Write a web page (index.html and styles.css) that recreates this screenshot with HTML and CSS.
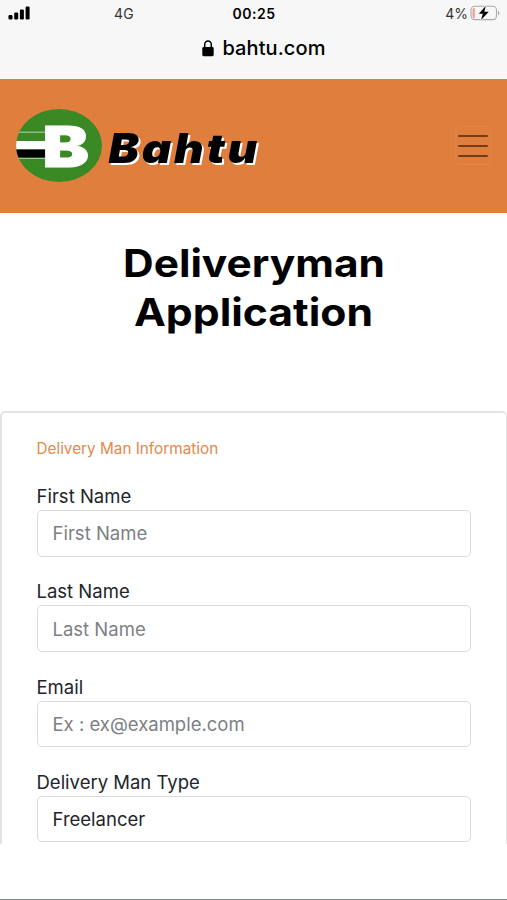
FILE: index.html
```html
<!DOCTYPE html>
<html lang="en">
<head>
<meta charset="utf-8">
<meta name="viewport" content="width=device-width, initial-scale=1">
<title>Deliveryman Application</title>
<link rel="stylesheet" href="styles.css">
</head>
<body>
<header class="browser">
  <div class="status">
    <div class="signal">
      <svg width="23" height="14" viewBox="0 0 23 14"><rect x="0.5" y="9" width="4" height="4.5" rx="1.2"/><rect x="6.2" y="6.5" width="4" height="7" rx="1.2"/><rect x="11.9" y="3.5" width="4" height="10" rx="1.2"/><rect x="17.6" y="0.5" width="4" height="13" rx="1.2"/></svg>
      <span class="network">4G</span>
    </div>
    <span class="clock">00:25</span>
    <div class="power">
      <span class="percent">4%</span>
      <svg width="30" height="16" viewBox="0 0 30 16"><rect x="1" y="1.2" width="25.500" height="13.4" rx="3.8" fill="none" stroke="#a9a9ab" stroke-width="1.1"/><path d="M4.8 3H4a1.5 1.5 0 0 0-1.5 1.5v7A1.500 1.500 0 0 0 4 13h.8z" fill="#ef9d94"/><path d="M28 5.500c1.800.7 1.800 4.200 0 5z" fill="#a9a9ab"/><path d="M15.700 1 8.800 8.800h4L11 15l7.800-8.200h-4.500z" stroke="#f7f7f7" stroke-width="1.4" paint-order="stroke"/></svg>
    </div>
  </div>
  <div class="address">
    <svg width="12" height="17" viewBox="0 0 12 17"><path d="M2.7 8V4.8a3.3 3.8 0 0 1 6.6 0V8" fill="none" stroke="#000" stroke-width="1.5"/><rect x="0.3" y="7" width="11.4" height="9.2" rx="1.4"/></svg>
    <span class="domain">bahtu.com</span>
  </div>
</header>
<nav class="navbar">
  <svg class="logo" width="250" height="80" viewBox="0 0 250 80">
    <defs><clipPath id="oval"><ellipse cx="43" cy="39.5" rx="43" ry="36.5"/></clipPath></defs>
    <ellipse cx="43" cy="39.5" rx="43" ry="36.5" fill="#3b8924"/>
    <g clip-path="url(#oval)">
      <path d="M0 26.200h32M0 52.300h32" stroke="#dce9d7" stroke-width=".8"/>
      <path d="M0 35h32v8.500H0z" fill="#fff"/>
      <path d="M0 43.500h32v8H0z" fill="#000"/>
    </g>
    <text class="initial" x="26.500" y="60.500" textLength="46.500" lengthAdjust="spacingAndGlyphs">B</text>
    <text class="wordmark" x="92.500" y="57" textLength="151.500" lengthAdjust="spacingAndGlyphs">Bahtu</text>
  </svg>
  <button class="menu" aria-label="Menu"><i></i><i></i><i></i></button>
</nav>
<main>
  <h1 class="title">
    <svg width="280" height="98" viewBox="0 0 280 98"><text x="9" y="38" textLength="262" lengthAdjust="spacingAndGlyphs">Deliveryman</text><text x="20" y="87" textLength="239" lengthAdjust="spacingAndGlyphs">Application</text></svg>
  </h1>
  <form class="card">
    <h2 class="section">Delivery Man Information</h2>
    <div class="field"><label for="first">First Name</label><input id="first" placeholder="First Name"></div>
    <div class="field"><label for="last">Last Name</label><input id="last" placeholder="Last Name"></div>
    <div class="field"><label for="email">Email</label><input id="email" placeholder="Ex : ex@example.com"></div>
    <div class="field"><label for="type">Delivery Man Type</label><select id="type"><option>Freelancer</option></select></div>
  </form>
</main>
<footer class="bottom"></footer>
</body>
</html>
```
FILE: styles.css
```css
* { box-sizing: border-box; }
body {
  margin: 0;
  height: 900px;
  display: flex;
  flex-direction: column;
  overflow: hidden;
  background: #fff;
  color: #212529;
  font-family: Inter, Roboto, sans-serif;
}
svg { display: block; flex: none; }
.browser { height: 78.500px; flex: none; background: #f7f7f7; color: #000; }
.status {
  height: 26px;
  padding: 0 7px 0 8px;
  display: grid;
  grid-template-columns: 1fr auto 1fr;
  align-items: center;
  font-size: 14px;
}
.signal { display: flex; align-items: center; gap: 83px; }
.network { color: #333; letter-spacing: .2px; }
.clock { font-weight: 600; letter-spacing: .5px; }
.power { display: flex; justify-content: flex-end; align-items: center; gap: 2px; color: #333; }
.address {
  height: 44px;
  display: flex;
  justify-content: center;
  align-items: center;
  gap: 8px;
  padding-left: 21px;
}
.domain { font-size: 20px; font-weight: 500; letter-spacing: .1px; }
.navbar {
  height: 134px;
  flex: none;
  background: #e07f3d;
  display: flex;
  align-items: center;
  justify-content: space-between;
  padding: 0 16px;
}
.logo { overflow: visible; }
.initial { font: 900 57px Inter, sans-serif; fill: #fff; stroke: #fff; stroke-width: 1px; }
.wordmark {
  font: italic 900 41px Inter, sans-serif;
  letter-spacing: 2.500px;
  fill: #000;
  filter: drop-shadow(2.500px 2.500px 0 #fff);
}
.menu {
  width: 36px;
  height: 39px;
  padding: 0 2px;
  border: 1px solid #e38546;
  border-radius: 4px;
  background: none;
  display: flex;
  flex-direction: column;
  justify-content: center;
  gap: 8px;
}
.menu i { height: 2px; background: #713d19; border-radius: 1px; }
main { height: 631.500px; flex: none; overflow: hidden; }
.title { height: 198.500px; margin: 0; padding-top: 26px; display: flex; justify-content: center; }
.title svg text { font: 700 38px Inter, sans-serif; fill: #000; }
.card {
  height: 520px;
  border: 2px solid #e2e3e4;
  border-right-width: 1.500px;
  border-radius: 5px;
  padding: 24px 35px 0 34.500px;
}
.section { margin: 0 0 23px; font-size: 15.300px; line-height: 24px; font-weight: 400; color: #e3894d; }
.field { height: 95.300px; }
label { display: block; height: 26px; font-size: 18.500px; line-height: 24px; }
input, select {
  display: block;
  width: 100%;
  height: 46.500px;
  padding: 0 15px;
  border: 1.500px solid #d8dbdd;
  border-radius: 5px;
  background: #fff;
  color: #212529;
  font: 18.500px Inter, sans-serif;
  appearance: none;
}
input::placeholder { color: #7b7f84; }
.bottom { flex: 1; background: #fff; border-bottom: 1px solid #7c917f; }
```
